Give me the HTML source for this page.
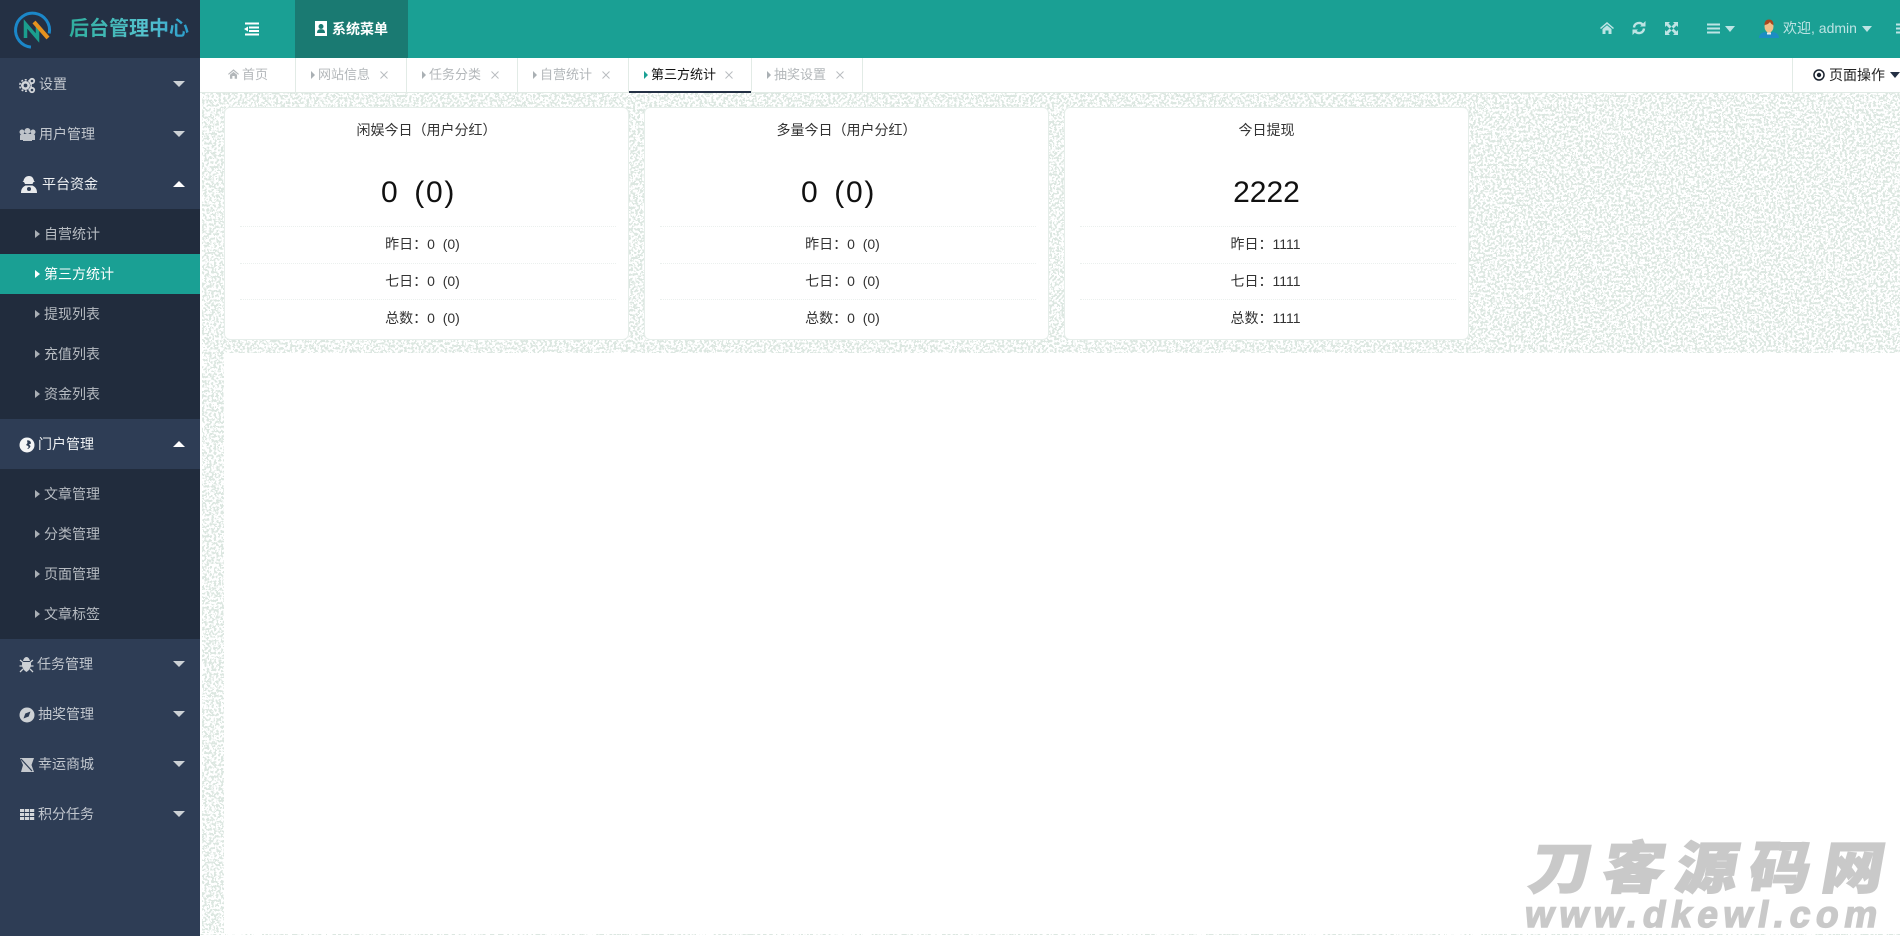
<!DOCTYPE html>
<html lang="zh-CN">
<head>
<meta charset="utf-8">
<title>后台管理中心</title>
<style>
html,body{margin:0;padding:0;width:1900px;height:936px;overflow:hidden;background:#fff;font-family:"Liberation Sans","Noto Sans CJK SC",sans-serif;}
.a{position:absolute;white-space:nowrap;}
#bgsvg{position:absolute;left:0;top:0;}
#side{position:absolute;left:0;top:58px;width:200px;height:878px;background:#2e3d55;}
.m{position:absolute;left:0;width:200px;height:50px;line-height:50px;font-size:14px;color:#c2c7ce;}
.m.o{color:#f0f2f4;}
.m span{position:absolute;top:0;}
.m svg{position:absolute;left:0;top:0;}
.car{position:absolute;left:173px;top:22px;width:0;height:0;border-left:6px solid transparent;border-right:6px solid transparent;border-top:6px solid #cdd2d6;}
.car.u{border-top:0;border-bottom:6px solid #fff;}
.subbg{position:absolute;left:0;width:200px;background:#212c3d;}
.s{position:absolute;left:0;width:200px;height:40px;line-height:40px;font-size:14px;color:#b6bbc1;}
.s i{position:absolute;left:35px;top:16px;width:0;height:0;border-top:4px solid transparent;border-bottom:4px solid transparent;border-left:5px solid #a9afb5;}
.s b{position:absolute;left:44px;top:0;font-weight:normal;}
.s.on{background:#1aa094;color:#fff;}
.s.on i{border-left-color:#fff;}
.tab{position:absolute;top:58px;height:34px;line-height:34px;font-size:13px;color:#b3b7ba;}
.tab i{position:absolute;top:13px;width:0;height:0;border-top:4px solid transparent;border-bottom:4px solid transparent;border-left:4px solid #aab0b4;}
.sep{position:absolute;top:58px;width:1px;height:34px;background:#e2ebe6;}
.x{position:absolute;top:71px;}
.card{position:absolute;top:107px;width:405px;height:233px;background:#fff;border:1px solid #e6eeea;border-radius:6px;box-sizing:border-box;}
.t{position:absolute;left:0;width:100%;text-align:center;color:#333;font-size:14px;top:12px;line-height:20px;}
.big{position:absolute;left:0;width:100%;text-align:center;color:#111;font-size:30px;line-height:40px;top:65px;}
.big span{letter-spacing:1.7px;}
.r{position:absolute;left:0;width:100%;text-align:center;color:#333;font-size:14px;line-height:20px;}
.d{position:absolute;left:15px;right:12px;height:0;border-top:1px dotted #ebf0ee;}
</style>
</head>
<body>
<svg id="bgsvg" width="1900" height="936" xmlns="http://www.w3.org/2000/svg">
<defs>
<filter id="n" x="0" y="0" width="100%" height="100%" color-interpolation-filters="sRGB">
<feTurbulence type="fractalNoise" baseFrequency="0.42" numOctaves="2" seed="7"/>
<feColorMatrix values="0 0 0 0 0.863  0 0 0 0 0.906  0 0 0 0 0.882  0 0 0 1 0"/>
<feComponentTransfer><feFuncA type="discrete" tableValues="0 0 0 0 0 0 0 0 0 0 0 0 0 1 1 1 1 1 1 1 1 1 1 1 1"/></feComponentTransfer>
</filter>
</defs>
<rect x="202" y="93" width="1698" height="260" fill="#000" filter="url(#n)"/>
<rect x="202" y="353" width="22" height="580" fill="#000" filter="url(#n)"/>
<rect x="200" y="934" width="1700" height="1" fill="#000" filter="url(#n)"/>
</svg>

<!-- top bar -->
<div class="a" style="left:200px;top:0;width:1700px;height:58px;background:#1aa094;"></div>
<div class="a" style="left:0;top:0;width:200px;height:58px;background:#243044;"></div>
<div class="a" style="left:0;top:58px;width:200px;height:1px;background:#4b5563;"></div>
<svg class="a" style="left:10px;top:8px;" width="44" height="44" viewBox="0 0 44 44">
<path d="M32 36A17 17 0 1 1 38 14" fill="none" stroke="#1b87c9" stroke-width="3" transform="rotate(38 22 21.500)"/>
<path d="M15.500 30V16l12 14V18" fill="none" stroke="#1b9e8e" stroke-width="3.500"/>
<path d="M24 14l14 16" stroke="#e6921e" stroke-width="4" fill="none"/>
</svg>
<div class="a" style="left:69px;top:14px;line-height:30px;font-size:20px;font-weight:bold;background:linear-gradient(90deg,#2fae9d,#56c3cf 65%,#2a9ccb);-webkit-background-clip:text;background-clip:text;color:transparent;">后台管理中心</div>

<svg class="a" style="left:244px;top:22px;" width="16" height="14" viewBox="0 0 16 14"><path d="M1 1.500h14M5 5.500h10M5 9h10M1 12.500h14" stroke="#fff" stroke-width="2"/><path d="M4 4.500L0 7l4 2.500z" fill="#fff"/></svg>
<div class="a" style="left:295px;top:0;width:113px;height:58px;background:#1a7a72;"></div>
<svg class="a" style="left:314px;top:21px;" width="13" height="15" viewBox="0 0 13 15"><path fill="#fff" d="M1 0h12v15H1z"/><circle cx="7" cy="5.500" r="2.500" fill="#1a7a72"/><path fill="#1a7a72" d="M3 12c0-3 1.500-3.800 4-3.800s4 .8 4 3.800z"/></svg>
<div class="a" style="left:332px;top:14px;line-height:30px;font-size:14px;font-weight:bold;color:#fff;">系统菜单</div>

<!-- right icons -->
<svg class="a" style="left:1600px;top:22px;" width="14" height="12" viewBox="0 0 14 12"><path fill="#bde4e4" d="M7 0l7 6-1 1-6-5-6 5-1-1zM2.500 7L7 3.300 11.500 7v5H8.500V8.500h-3V12h-3z"/></svg>
<svg class="a" style="left:1632px;top:21px;" width="14" height="14" viewBox="0 0 14 14"><path fill="none" stroke="#bde4e4" stroke-width="2.400" d="M2 6.500A5 5 0 0 1 11 4M12 7.500A5 5 0 0 1 3 10"/><path fill="#bde4e4" d="M13.500 0v5.500H8zM.5 14V8.500H6z"/></svg>
<svg class="a" style="left:1665px;top:22px;" width="13" height="13" viewBox="0 0 13 13"><path fill="#bde4e4" d="M0 0h5L3.500 1.500 6.500 4.500 4.500 6.500 1.500 3.500 0 5zM13 0v5l-1.500-1.500-3 3-2-2 3-3L8 0zM0 13V8l1.500 1.500 3-3 2 2-3 3L5 13zM13 13H8l1.500-1.500-3-3 2-2 3 3L13 8z"/></svg>
<svg class="a" style="left:1707px;top:23px;" width="13" height="11" viewBox="0 0 13 11"><path stroke="#bde4e4" stroke-width="2" d="M0 1.500h13M0 5.500h13M0 9.500h13"/></svg>
<div class="a" style="left:1725px;top:26px;width:0;height:0;border-left:5.500px solid transparent;border-right:5.500px solid transparent;border-top:6px solid #bde4e4;"></div>
<svg class="a" style="left:1759px;top:19px;" width="20" height="20" viewBox="0 0 20 20"><path fill="#1d8cc4" d="M0 19c0-4 3-5.500 6-6l4 2 4-2c3 .5 6 2 6 6z"/><ellipse cx="10" cy="7.500" rx="4.500" ry="6" fill="#f0c088"/><path fill="#a8481f" d="M5.500 6c0-4 2-5.500 4.500-5.500S14.500 2 14.500 6c-2-.5-3-2-3.500-3-1 1.500-3 2.700-5.500 3z"/><path fill="#e8eef0" d="M8 13.500h4v2h-4z"/></svg>
<div class="a" style="left:1783px;top:13px;line-height:30px;font-size:14px;color:#bde4e4;">欢迎, admin</div>
<div class="a" style="left:1862px;top:26px;width:0;height:0;border-left:5.500px solid transparent;border-right:5.500px solid transparent;border-top:6px solid #bde4e4;"></div>
<svg class="a" style="left:1896px;top:23px;" width="4" height="11"><path stroke="#bde4e4" stroke-width="2" d="M0 1.500h4M0 5.500h4M0 9.500h4"/></svg>

<!-- sidebar -->
<div id="side">
  <div class="m" style="top:1px;">
    <svg width="40" height="50"><circle cx="25.500" cy="26.500" r="3.200" fill="none" stroke="#d3d6da" stroke-width="2.600"/><circle cx="25.500" cy="26.500" r="5.700" fill="none" stroke="#d3d6da" stroke-width="1.600" stroke-dasharray="2 1.700"/><circle cx="32" cy="22" r="2.200" fill="none" stroke="#d3d6da" stroke-width="1.800"/><circle cx="32" cy="31" r="2.200" fill="none" stroke="#d3d6da" stroke-width="1.800"/></svg>
    <span style="left:39px;">设置</span><div class="car"></div></div>
  <div class="m" style="top:51px;">
    <svg width="40" height="50"><circle cx="27.500" cy="22" r="3" fill="#bfc4ca"/><circle cx="22" cy="23" r="2.500" fill="#bfc4ca"/><circle cx="33" cy="23" r="2.500" fill="#bfc4ca"/><path fill="#bfc4ca" d="M20 31v-4c0-1.500 1-2 2-2h11c1 0 2 .5 2 2v4h-3v1h-9v-1z"/></svg>
    <span style="left:39px;">用户管理</span><div class="car"></div></div>
  <div class="m o" style="top:101px;">
    <svg width="40" height="50"><path fill="#e8eaec" d="M29 17c3 0 4.500 2 5 5l1 1h-1.500l-1 2H25l-1-2h-1.500l1-1c.5-3 2.500-5 5.500-5zM21 34c0-4 1.500-6 4.500-7.500h7c3 1.500 4.500 3.500 4.500 7.500z"/><circle cx="29" cy="30" r="2" fill="#2e3d55"/></svg>
    <span style="left:42px;">平台资金</span><div class="car u"></div></div>

  <div class="subbg" style="top:151px;height:210px;"></div>
  <div class="s" style="top:156px;"><i></i><b>自营统计</b></div>
  <div class="s on" style="top:196px;"><i></i><b>第三方统计</b></div>
  <div class="s" style="top:236px;"><i></i><b>提现列表</b></div>
  <div class="s" style="top:276px;"><i></i><b>充值列表</b></div>
  <div class="s" style="top:316px;"><i></i><b>资金列表</b></div>

  <div class="m o" style="top:361px;">
    <svg width="40" height="50"><circle cx="27" cy="26" r="7.500" fill="#f4f5f6"/><path d="M27 21.500c2.500-.5 4 1 4 3l-2 1 1.500 1.500c-.5 2-2 3-3.500 3 1.500-1 2-2 1-3l-2-1 1.500-2z" fill="#2e3d55"/></svg>
    <span style="left:38px;">门户管理</span><div class="car u"></div></div>

  <div class="subbg" style="top:411px;height:170px;"></div>
  <div class="s" style="top:416px;"><i></i><b>文章管理</b></div>
  <div class="s" style="top:456px;"><i></i><b>分类管理</b></div>
  <div class="s" style="top:496px;"><i></i><b>页面管理</b></div>
  <div class="s" style="top:536px;"><i></i><b>文章标签</b></div>

  <div class="m" style="top:581px;">
    <svg width="40" height="50"><path fill="#cdd1d5" d="M23 22c.5-2.500 2-4 3.500-4s3 1.500 3.500 4zM22.500 23h8c1 1.500 1 7-4 10-5-3-5-8.500-4-10z"/><path stroke="#cdd1d5" stroke-width="1.300" d="M20 21l3 2.500M33 21l-3 2.500M19.500 27h14M20 33l3-3M33 33l-3-3"/></svg>
    <span style="left:37px;">任务管理</span><div class="car"></div></div>
  <div class="m" style="top:631px;">
    <svg width="40" height="50"><circle cx="27" cy="26" r="7.500" fill="#cdd1d5"/><path d="M23.500 29.500l1.800-5 5.200-2-1.800 5z" fill="#2e3d55"/></svg>
    <span style="left:38px;">抽奖管理</span><div class="car"></div></div>
  <div class="m" style="top:681px;">
    <svg width="40" height="50"><path fill="#c5c9ce" d="M20 19h14l-2.500 7 2.500 7H21l2-7z"/><path d="M21 20l11 12" stroke="#2e3d55" stroke-width="1.200"/></svg>
    <span style="left:38px;">幸运商城</span><div class="car"></div></div>
  <div class="m" style="top:731px;">
    <svg width="40" height="50"><path fill="#d4d7da" d="M20 20h4.200v3H20zM25 20h4.200v3H25zM30 20h4.200v3H30zM20 24h4.200v3H20zM25 24h4.200v3H25zM30 24h4.200v3H30zM20 28h4.200v3H20zM25 28h4.200v3H25zM30 28h4.200v3H30z"/></svg>
    <span style="left:38px;">积分任务</span><div class="car"></div></div>
</div>

<!-- tab bar -->
<div class="a" style="left:200px;top:58px;width:1700px;height:34px;background:#fff;"></div>
<div class="a" style="left:200px;top:92px;width:1700px;height:1px;background:#e2ebe6;"></div>
<div class="sep" style="left:295px;"></div>
<div class="sep" style="left:406px;"></div>
<div class="sep" style="left:517px;"></div>
<div class="sep" style="left:628px;"></div>
<div class="sep" style="left:751px;"></div>
<div class="sep" style="left:862px;"></div>
<div class="sep" style="left:1792px;"></div>
<div class="a" style="left:629px;top:91px;width:122px;height:2px;background:#243044;"></div>

<svg class="a" style="left:228px;top:69px;" width="11" height="10" viewBox="0 0 14 12"><path fill="#b3b7ba" d="M7 0l7 6-1 1-6-5-6 5-1-1zM2.500 7L7 3.300 11.500 7v5H8.500V8.500h-3V12h-3z"/></svg>
<div class="tab a" style="left:242px;">首页</div>

<div class="tab" style="left:318px;"><i style="left:-7px;"></i>网站信息</div>
<div class="tab" style="left:429px;"><i style="left:-7px;"></i>任务分类</div>
<div class="tab" style="left:540px;"><i style="left:-7px;"></i>自营统计</div>
<div class="tab" style="left:651px;color:#111;"><i style="left:-7px;border-left-color:#1aa094;"></i>第三方统计</div>
<div class="tab" style="left:774px;"><i style="left:-7px;"></i>抽奖设置</div>

<svg class="x" style="left:380px;" width="8" height="8"><path d="M.5.500l7 7M7.500.500l-7 7" stroke="#b9bdc0" stroke-width="1"/></svg>
<svg class="x" style="left:491px;" width="8" height="8"><path d="M.5.500l7 7M7.500.500l-7 7" stroke="#b9bdc0" stroke-width="1"/></svg>
<svg class="x" style="left:602px;" width="8" height="8"><path d="M.5.500l7 7M7.500.500l-7 7" stroke="#b9bdc0" stroke-width="1"/></svg>
<svg class="x" style="left:725px;" width="8" height="8"><path d="M.5.500l7 7M7.500.500l-7 7" stroke="#b9bdc0" stroke-width="1"/></svg>
<svg class="x" style="left:836px;" width="8" height="8"><path d="M.5.500l7 7M7.500.500l-7 7" stroke="#b9bdc0" stroke-width="1"/></svg>

<svg class="a" style="left:1813px;top:69px;" width="12" height="12"><circle cx="6" cy="6" r="5" fill="none" stroke="#1c2430" stroke-width="1.500"/><circle cx="6" cy="6" r="2.200" fill="#1c2430"/></svg>
<div class="a" style="left:1829px;top:60px;line-height:30px;font-size:14px;color:#222;">页面操作</div>
<div class="a" style="left:1890px;top:72px;width:0;height:0;border-left:5.500px solid transparent;border-right:5.500px solid transparent;border-top:6px solid #243044;"></div>

<!-- cards -->
<div class="card" style="left:224px;">
  <div class="t">闲娱今日（用户分红）</div>
  <div class="big" style="left:-8px;">0&nbsp;&nbsp;<span>(0)</span></div>
  <div class="d" style="top:118px;"></div>
  <div class="r" style="top:126px;left:-4px;">昨日：0&nbsp;&nbsp;(0)</div>
  <div class="d" style="top:155px;"></div>
  <div class="r" style="top:163px;left:-4px;">七日：0&nbsp;&nbsp;(0)</div>
  <div class="d" style="top:191px;"></div>
  <div class="r" style="top:200px;left:-4px;">总数：0&nbsp;&nbsp;(0)</div>
</div>
<div class="card" style="left:644px;">
  <div class="t">多量今日（用户分红）</div>
  <div class="big" style="left:-8px;">0&nbsp;&nbsp;<span>(0)</span></div>
  <div class="d" style="top:118px;"></div>
  <div class="r" style="top:126px;left:-4px;">昨日：0&nbsp;&nbsp;(0)</div>
  <div class="d" style="top:155px;"></div>
  <div class="r" style="top:163px;left:-4px;">七日：0&nbsp;&nbsp;(0)</div>
  <div class="d" style="top:191px;"></div>
  <div class="r" style="top:200px;left:-4px;">总数：0&nbsp;&nbsp;(0)</div>
</div>
<div class="card" style="left:1064px;">
  <div class="t">今日提现</div>
  <div class="big">2222</div>
  <div class="d" style="top:118px;"></div>
  <div class="r" style="top:126px;left:-1px;">昨日：1111</div>
  <div class="d" style="top:155px;"></div>
  <div class="r" style="top:163px;left:-1px;">七日：1111</div>
  <div class="d" style="top:191px;"></div>
  <div class="r" style="top:200px;left:-1px;">总数：1111</div>
</div>

<!-- watermark -->
<svg class="a" style="left:1500px;top:810px;" width="400" height="126" viewBox="0 0 400 126">
  <g transform="skewX(-10) scale(1.1,1)" fill="#c9c9c9">
    <text x="37" y="78" font-family="'Noto Sans CJK SC',sans-serif" font-weight="900" font-size="56" textLength="322" lengthAdjust="spacing" stroke="#c9c9c9" stroke-width="1.500">刀客源码网</text>
  </g>
  <g transform="skewX(-10)" fill="#c9c9c9">
    <text x="44" y="117" font-family="'Liberation Sans',sans-serif" font-weight="bold" font-size="37" textLength="352" lengthAdjust="spacing" stroke="#c9c9c9" stroke-width="1.500">www.dkewl.com</text>
  </g>
</svg>
</body>
</html>
